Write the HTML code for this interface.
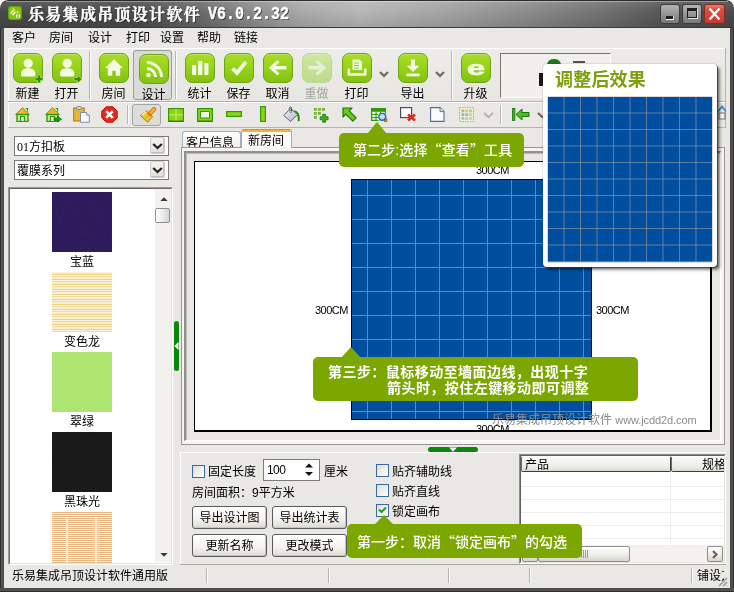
<!DOCTYPE html>
<html lang="zh-CN">
<head>
<meta charset="utf-8">
<title>乐易集成吊顶设计软件</title>
<style>
*{box-sizing:border-box;margin:0;padding:0}
html,body{width:734px;height:592px;overflow:hidden;background:#fff}
body{font-family:"Liberation Sans","Noto Sans CJK SC",sans-serif;font-size:12px;color:#000;line-height:14px}
#win,#win div,#win span.p,#win svg{position:absolute}
#win{left:0;top:0;width:734px;height:592px;background:#e9e8e4;border-radius:8px 8px 0 0;overflow:hidden}
#title{left:0;top:0;width:734px;height:28px;background:linear-gradient(180deg,rgba(255,255,255,.12) 0,rgba(255,255,255,0) 45%,rgba(0,0,0,.10) 100%),linear-gradient(90deg,#484848 0,#4c4c4c 19%,#686868 27%,#8a8a8a 34%,#a8a8a8 41%,#b6b6b6 49%,#a2a2a2 61%,#8c8c8c 71%,#707070 82%,#565656 90%,#4a4a4a 100%);border-top:1px solid #2b2b2b;border-bottom:1px solid #3a3a3a;border-radius:8px 8px 0 0}
#title .hl{left:6px;top:0;width:722px;height:1px;background:rgba(255,255,255,.35)}
#ttext{left:28px;top:3px;font-family:"Liberation Serif","Noto Serif CJK SC",serif;font-weight:bold;font-size:16px;line-height:22px;color:#fff;white-space:nowrap;letter-spacing:1.3px;text-shadow:1px 1px 0 #2a2a2a;-webkit-text-stroke:.35px #fff}
#ttext span{position:absolute;left:180px;top:-1px;font-family:'Liberation Mono',monospace;font-size:18px;letter-spacing:0;transform:scaleX(.833);transform-origin:0 0}
.fr{background:#4b4b4b}
.t{white-space:nowrap;font-size:12px;line-height:14px;margin-top:1px}
.ico{width:30px;height:30px;border-radius:7px;border:1px solid #6fa312;background:linear-gradient(180deg,#a8dc2a 0,#98d41a 45%,#84c212 100%);box-shadow:inset 0 1px 0 rgba(255,255,255,.25)}
.ico svg{left:-1px;top:-1px}
.lbl{width:39px;text-align:center;font-size:12px;line-height:14px;white-space:nowrap}
.vsep{width:2px;border-left:1px solid #b9b7b0;border-right:1px solid #fff}
.tip{background:#7ca700;color:#fff;border-radius:5px;font-weight:bold;font-size:14px;line-height:16px;white-space:nowrap}
.btn{width:75px;height:23px;border:1px solid #5a5a5a;border-radius:3px;background:linear-gradient(180deg,#fff 0,#f3f2ee 60%,#dcdad2 100%);text-align:center;line-height:22px;font-size:12px;box-shadow:inset -1px -1px 0 #c8c6bd}
.q{font-family:'Noto Sans CJK SC',sans-serif}
.chk{width:13px;height:13px;border:1px solid #3a6a9c;background:linear-gradient(135deg,#dddcd6,#fff)}
</style>
</head>
<body>
<div id="win">
<div class="fr" style="left:0;top:20px;width:4px;height:572px;background:linear-gradient(90deg,#2e2e2e 0,#2e2e2e 1px,#5a5a5a 1px,#4b4b4b 4px)"></div>
<div class="fr" style="left:730px;top:20px;width:4px;height:572px;background:linear-gradient(90deg,#4b4b4b 0,#555 3px,#2e2e2e 3px)"></div>
<div class="fr" style="left:0;top:588px;width:734px;height:4px;background:linear-gradient(180deg,#4b4b4b 0,#555 3px,#2e2e2e 3px)"></div>
<div id="title"><div class="hl"></div>
<svg style="left:8px;top:5px" width="14" height="14" viewBox="0 0 14 14"><rect x="0" y="0" width="14" height="14" rx="3" fill="#5aa50c"/><rect x="1" y="1" width="12" height="12" rx="2.5" fill="#7cc416"/><path d="M2.500 7.500 6.500 3.500M4.500 9 7.500 6" stroke="#fff" stroke-width="1.500"/><path d="M5.500 1.500l.9 1.800 1.800.9-1.800.9-.9 1.800-.9-1.800-1.800-.9 1.800-.9zM9.500 4l.7 1.400 1.400.7-1.400.7-.7 1.400-.7-1.400-1.400-.7 1.400-.7z" fill="#ffd21e"/><rect x="8" y="8.5" width="4" height="3" fill="#fff"/><rect x="9" y="9.3" width="2" height="1.4" fill="#6cb40f"/></svg>
<div id="ttext">乐易集成吊顶设计软件<span>V6.0.2.32</span></div>
<div style="left:660px;top:3px;width:20px;height:20px;border-radius:3px;border:1px solid #3c3c3c;background:linear-gradient(180deg,#b4b4b4,#787878)"><div style="left:5px;top:11px;width:7px;height:3px;background:#1e1e1e;border-bottom:1px solid #fff;border-right:1px solid #ddd;box-sizing:content-box"></div></div>
<div style="left:682px;top:3px;width:20px;height:20px;border-radius:3px;border:1px solid #3c3c3c;background:linear-gradient(180deg,#b4b4b4,#787878)"><div style="left:4px;top:3px;width:10px;height:10px;border:1px solid #1e1e1e;border-top:3px solid #1e1e1e;box-shadow:1px 1px 0 #e8e8e8"></div></div>
<div style="left:704px;top:3px;width:21px;height:20px;border-radius:3px;border:1px solid #8c2a22;background:linear-gradient(180deg,#e8806a 0,#dc4e40 25%,#c83a30 100%)"><svg style="left:3px;top:2px" width="13" height="14" viewBox="0 0 13 14" overflow="visible"><path d="M1.5 1.5 L11.5 12.5 M11.5 1.5 L1.5 12.5" stroke="#fff" stroke-width="2.2"/></svg></div>
</div>
<div class="t" style="left:12px;top:30px">客户</div>
<div class="t" style="left:49px;top:30px">房间</div>
<div class="t" style="left:88px;top:30px">设计</div>
<div class="t" style="left:126px;top:30px">打印</div>
<div class="t" style="left:160px;top:30px">设置</div>
<div class="t" style="left:197px;top:30px">帮助</div>
<div class="t" style="left:234px;top:30px">链接</div>
<div style="left:8px;top:48px;width:718px;height:54px;background:linear-gradient(180deg,#eeece9,#e8e6e1)"></div>
<div style="left:8px;top:48px;width:718px;height:1px;background:#fff"></div>
<div style="left:8px;top:48px;width:1px;height:53px;background:#fff"></div>
<div style="left:8px;top:101px;width:718px;height:1px;background:#b5b3ab"></div>
<div style="left:8px;top:102px;width:718px;height:1px;background:#fff"></div>
<div style="left:8px;top:102px;width:1px;height:25px;background:#fff"></div>
<div style="left:8px;top:127px;width:718px;height:1px;background:#b5b3ab"></div>
<div style="left:725px;top:48px;width:1px;height:80px;background:#b5b3ab"></div>
<div style="left:133px;top:50px;width:39px;height:50px;border:1px solid #9d9d9a;border-radius:3px;background:#dadad6"></div>
<div class="ico" style="left:13px;top:53px"><svg width="30" height="30" viewBox="0 0 30 30"><circle cx="15.2" cy="10.3" r="4.6" fill="#f3fae0"/><path d="M8 21.5c0-4 2-6.2 7.2-6.2s7.2 2.2 7.2 6.2c0 1.4-.8 2-2 2h-10.4c-1.2 0-2-.6-2-2z" fill="#f3fae0"/><path d="M24.600 22h2.800v2.600H30v2.800h-2.600V30h-2.800v-2.600H22v-2.800h2.600z" fill="#2c8a0a" stroke="#a5dc4a" stroke-width=".9"/></svg></div>
<div class="lbl" style="left:8px;top:87px">新建</div>
<div class="ico" style="left:52px;top:53px"><svg width="30" height="30" viewBox="0 0 30 30"><circle cx="15.2" cy="10.3" r="4.6" fill="#f3fae0"/><path d="M8 21.5c0-4 2-6.2 7.2-6.2s7.2 2.2 7.2 6.2c0 1.4-.8 2-2 2h-10.4c-1.2 0-2-.6-2-2z" fill="#f3fae0"/><path d="M22 24.600h3.600V22.200l4.400 4-4.400 4v-2.400H22z" fill="#2c8a0a" stroke="#a5dc4a" stroke-width=".9"/></svg></div>
<div class="lbl" style="left:47px;top:87px">打开</div>
<div class="ico" style="left:99px;top:53px"><svg width="30" height="30" viewBox="0 0 30 30"><path d="M15 6.2 6 15h2.8v7.8h4.4v-5h3.6v5h4.4V15H24z" fill="#f3fae0"/></svg></div>
<div class="lbl" style="left:94px;top:87px">房间</div>
<div class="ico" style="left:139px;top:54px"><svg width="30" height="30" viewBox="0 0 30 30"><circle cx="9.5" cy="21" r="2.3" fill="#f3fae0"/><path d="M8 14.5a8.5 8.5 0 0 1 8.5 8.5" fill="none" stroke="#f3fae0" stroke-width="3"/><path d="M8 8.5a14.5 14.5 0 0 1 14.5 14.5" fill="none" stroke="#f3fae0" stroke-width="3"/></svg></div>
<div class="lbl" style="left:134px;top:88px">设计</div>
<div class="ico" style="left:185px;top:53px"><svg width="30" height="30" viewBox="0 0 30 30"><rect x="7" y="12" width="4.2" height="10" rx=".8" fill="#f3fae0"/><rect x="13" y="8" width="4.4" height="14" rx=".8" fill="#f3fae0"/><rect x="19.3" y="10" width="4.2" height="12" rx=".8" fill="#f3fae0"/></svg></div>
<div class="lbl" style="left:180px;top:87px">统计</div>
<div class="ico" style="left:224px;top:53px"><svg width="30" height="30" viewBox="0 0 30 30"><path d="M8.5 15.5 13 20 21.8 8.8" fill="none" stroke="#f3fae0" stroke-width="3.8" stroke-linejoin="miter"/></svg></div>
<div class="lbl" style="left:219px;top:87px">保存</div>
<div class="ico" style="left:263px;top:53px"><svg width="30" height="30" viewBox="0 0 30 30"><path d="M5.8 14.8 14.5 7l1.9 2.2-4 3.8H23.5v3.6H12.4l4 3.8-1.9 2.2z" fill="#f3fae0"/></svg></div>
<div class="lbl" style="left:258px;top:87px">取消</div>
<div class="ico" style="left:302px;top:53px;background:linear-gradient(180deg,#cfe6a0,#bedb8c);border-color:#bcd694"><svg width="30" height="30" viewBox="0 0 30 30"><path d="M24.2 14.8 15.5 7l-1.9 2.2 4 3.8H6.5v3.6h11.1l-4 3.8 1.9 2.2z" fill="#e6f0d2"/></svg></div>
<div class="lbl" style="left:297px;top:87px;color:#a3a3a3">重做</div>
<div class="ico" style="left:342px;top:53px"><svg width="30" height="30" viewBox="0 0 30 30"><path d="M10.5 6.5h7l2.5 2.5v8h-9.5z" fill="#f3fae0"/><path d="M12 10h5M12 12.5h5M12 15h5" stroke="#8cc820" stroke-width="1"/><path d="M6.8 15.5v6h16.4v-6" fill="none" stroke="#f3fae0" stroke-width="2.6" stroke-linejoin="round"/></svg></div>
<div class="lbl" style="left:337px;top:87px">打印</div>
<div class="ico" style="left:398px;top:53px"><svg width="30" height="30" viewBox="0 0 30 30"><path d="M13 6.5h4v6.3h4.3L15 19l-6.3-6.200H13z" fill="#f3fae0"/><rect x="8.200" y="20.5" width="13.6" height="2.800" rx="1" fill="#f3fae0"/></svg></div>
<div class="lbl" style="left:393px;top:87px">导出</div>
<div class="ico" style="left:461px;top:53px"><svg width="30" height="30" viewBox="0 0 30 30"><text x="15" y="22.500" text-anchor="middle" font-family="Liberation Sans,sans-serif" font-weight="bold" font-size="26" fill="#f3fae0" stroke="#f3fae0" stroke-width=".9" transform="translate(15 0) scale(1.25 .78) translate(-15 6.200)">e</text></svg></div>
<div class="lbl" style="left:456px;top:87px">升级</div>
<div class="vsep" style="left:89px;top:51px;height:48px"></div>
<div class="vsep" style="left:175px;top:51px;height:48px"></div>
<div class="vsep" style="left:451px;top:51px;height:48px"></div>
<svg style="left:379px;top:71px" width="10" height="7" viewBox="0 0 10 7"><path d="M1 1 5 5 9 1" fill="none" stroke="#6a6158" stroke-width="2"/></svg>
<svg style="left:435px;top:71px" width="10" height="7" viewBox="0 0 10 7"><path d="M1 1 5 5 9 1" fill="none" stroke="#6a6158" stroke-width="2"/></svg>
<div style="left:500px;top:53px;width:111px;height:45px;background:#f1f0ed;border-left:1px solid #77756e;border-top:1px solid #77756e;border-right:1px solid #fff;border-bottom:1px solid #fff"></div>
<div style="left:539px;top:73px;width:4px;height:13px;background:#1a1a1a"></div>
<div style="left:547px;top:59px;width:14px;height:6px;border-radius:7px 7px 0 0;background:#1d7a1d"></div>
<div style="left:573px;top:61px;width:12px;height:2px;background:#555"></div>
<svg style="left:15px;top:107px" width="15" height="15" viewBox="0 0 15 15"><path d="M7.500 .8 .6 7.600h13.800z" fill="#f6b422" stroke="#5a9a10" stroke-width="1"/><path d="M10.500 1.500h2v3" fill="none" stroke="#2f9a06" stroke-width="1.200"/><rect x="2" y="7.500" width="11" height="7" fill="#c9ee9a" stroke="#2f9a06" stroke-width="1.400"/><rect x="5.500" y="9.500" width="4" height="5" fill="#eaf8d4" stroke="#2f9a06" stroke-width="1.200"/></svg>
<svg style="left:45px;top:107px" width="17" height="15" viewBox="0 0 17 15"><path d="M7.500 .8 .6 7.600h13.800z" fill="#f6b422" stroke="#5a9a10" stroke-width="1"/><path d="M10.500 1.500h2v3" fill="none" stroke="#2f9a06" stroke-width="1.200"/><rect x="2" y="7.500" width="11" height="7" fill="#c9ee9a" stroke="#2f9a06" stroke-width="1.400"/><rect x="5.500" y="9.500" width="4" height="5" fill="#eaf8d4" stroke="#2f9a06" stroke-width="1.200"/><path d="M9 11h3.500V9l4 3.200-4 3.200v-2H9z" fill="#22a010" stroke="#0b6a00" stroke-width=".7"/></svg>
<svg style="left:73px;top:106px" width="17" height="17" viewBox="0 0 17 17"><rect x=".7" y="2" width="10.500" height="13" fill="#e9b43a" stroke="#b07a12" stroke-width="1"/><rect x="3.500" y=".5" width="5" height="3" rx="1" fill="#c9d3e6" stroke="#6a7c9c" stroke-width=".8"/><path d="M7.500 6.500h6l2.800 2.800v7h-8.800z" fill="#fafcff" stroke="#7a8db0" stroke-width="1"/><path d="M13.500 6.500v2.800h2.800" fill="#d5deee" stroke="#7a8db0" stroke-width=".8"/></svg>
<svg style="left:101px;top:106px" width="17" height="17" viewBox="0 0 17 17"><path d="M5.200 .8h6.600l4.400 4.400v6.600l-4.400 4.400H5.200L.8 11.800V5.200z" fill="#e52a1c" stroke="#b01208" stroke-width="1"/><path d="M5.200 5.200l6.600 6.600M11.800 5.200l-6.600 6.600" stroke="#fff" stroke-width="2.600"/></svg>
<div class="vsep" style="left:127px;top:105px;height:19px"></div>
<div style="left:132px;top:104px;width:29px;height:22px;border:1px solid #a3a39f;border-radius:3px;background:#dcdcd8"></div>
<svg style="left:140px;top:107px" width="17" height="16" viewBox="0 0 17 16"><path d="M10.500 6 14 2.300" stroke="#b8780a" stroke-width="4.400" stroke-linecap="round"/><path d="M10.500 6 14 2.300" stroke="#f3b325" stroke-width="2.800" stroke-linecap="round"/><path d="M6.400 4 12.600 9.500 7.600 15.200.4 8.500z" fill="#f6c220" stroke="#b8780a" stroke-width="1"/><path d="M7.300 5.500 11.300 9.200" stroke="#ee6a1c" stroke-width="1.800"/><path d="M1.800 8.200 6.200 4.800" stroke="#fff7d8" stroke-width="1.200"/><path d="M5.500 12 8.500 8.800" stroke="#9ed23a" stroke-width="1.400"/></svg>
<svg style="left:168px;top:108px" width="16" height="14" viewBox="0 0 16 14"><rect x=".6" y=".6" width="14.800" height="12.800" fill="#8ed414" stroke="#2f9a06" stroke-width="1.200"/><path d="M8 1v12M1 6.800h14" stroke="#c7f06a" stroke-width="1"/><path d="M1 13.200h14" stroke="#1f7a04" stroke-width="1"/></svg>
<svg style="left:197px;top:108px" width="16" height="14" viewBox="0 0 16 14"><rect x=".6" y=".6" width="14.800" height="12.800" fill="#8ed414" stroke="#2f9a06" stroke-width="1.200"/><rect x="3.500" y="3.500" width="9" height="6.500" fill="#f0f6e8" stroke="#2f9a06" stroke-width="1"/><path d="M1 13.200h14" stroke="#1f7a04" stroke-width="1"/></svg>
<svg style="left:226px;top:111px" width="16" height="6" viewBox="0 0 16 6"><rect x=".6" y=".6" width="14.800" height="4.800" fill="#8ed414" stroke="#2f9a06" stroke-width="1.200"/></svg>
<svg style="left:260px;top:106px" width="6" height="16" viewBox="0 0 6 16"><rect x=".6" y=".6" width="4.800" height="14.800" fill="#8ed414" stroke="#2f9a06" stroke-width="1.200"/></svg>
<svg style="left:283px;top:106px" width="17" height="16" viewBox="0 0 17 16"><defs><linearGradient id="bk" x1="0" y1="0" x2="1" y2="1"><stop offset="0" stop-color="#f4f6fa"/><stop offset="1" stop-color="#aab2c0"/></linearGradient></defs><path d="M11 5.200C14.500 5.500 16.200 9 15.600 15.200" fill="none" stroke="#1f8a06" stroke-width="2"/><path d="M7.300 2.500 14.700 8.300 7.700 15.600.8 9.500z" fill="url(#bk)" stroke="#5a6474" stroke-width="1"/><path d="M7.800 5.500C6 3.500 6 1.200 7.500 1c1.200 0 1.500 1.500 .8 4.500" fill="none" stroke="#3a4454" stroke-width=".9"/><circle cx="7.800" cy="5.800" r="1" fill="#fff" stroke="#3a4454" stroke-width=".6"/></svg>
<svg style="left:314px;top:108px" width="15" height="15" viewBox="0 0 15 15"><rect x="0.3" y="0.3" width="2.400" height="2.400" fill="#8fc43a" stroke="#4a9a1a" stroke-width=".5"/><rect x="4.3" y="0.3" width="2.400" height="2.400" fill="#8fc43a" stroke="#4a9a1a" stroke-width=".5"/><rect x="8.3" y="0.3" width="2.400" height="2.400" fill="#8fc43a" stroke="#4a9a1a" stroke-width=".5"/><rect x="0.3" y="4.3" width="2.400" height="2.400" fill="#8fc43a" stroke="#4a9a1a" stroke-width=".5"/><rect x="4.3" y="4.3" width="2.400" height="2.400" fill="#8fc43a" stroke="#4a9a1a" stroke-width=".5"/><rect x="0.3" y="8.3" width="2.400" height="2.400" fill="#8fc43a" stroke="#4a9a1a" stroke-width=".5"/><path d="M8.700 6.300h2.900v2.500h2.500v2.900h-2.500v2.500H8.700v-2.500H6.200V8.800h2.500z" fill="#3fb01a" stroke="#17750a" stroke-width=".8"/></svg>
<svg style="left:342px;top:107px" width="15" height="15" viewBox="0 0 15 15"><path d="M1 1h9L7.200 3.800l7 7-3.400 3.400-7-7L1 10z" fill="#6cc81a" stroke="#1f7a04" stroke-width="1.200" stroke-linejoin="round"/></svg>
<svg style="left:371px;top:108px" width="17" height="14" viewBox="0 0 17 14"><rect x=".6" y=".6" width="13.800" height="11.800" fill="#eaf6da" stroke="#2f9a06" stroke-width="1.200"/><rect x=".6" y=".6" width="13.800" height="3.200" fill="#2f9a06"/><path d="M1 6.500h13M1 9.500h13M5 4v8.500M9.500 4v8.500" stroke="#2f9a06" stroke-width="1"/><rect x="7" y="5" width="7.500" height="7.500" fill="#fff"/><circle cx="11.300" cy="8.800" r="3.400" fill="#bfe0ff" stroke="#1a64c8" stroke-width="1.400"/><rect x="13.500" y="11" width="2.500" height="2.500" fill="#e8a020" stroke="#5a3a00" stroke-width=".6"/></svg>
<svg style="left:400px;top:107px" width="17" height="15" viewBox="0 0 17 15"><rect x=".6" y=".6" width="11" height="10" fill="#fff" stroke="#4a4a6a" stroke-width="1.200"/><path d="M8 7.500l7 6M15 7.500l-7 6" stroke="#e02a1a" stroke-width="2.600"/></svg>
<svg style="left:430px;top:107px" width="15" height="15" viewBox="0 0 15 15"><path d="M.6 .6h9.400l4 4v9.800H.6z" fill="#fafcff" stroke="#5a6a8a" stroke-width="1.100"/><path d="M10 .6v4h4" fill="#d8e0f0" stroke="#5a6a8a" stroke-width=".9"/></svg>
<svg style="left:459px;top:107px" width="15" height="15" viewBox="0 0 15 15"><rect x=".5" y=".5" width="14" height="14" fill="#e6f0da" stroke="#9ac26a" stroke-width="1" stroke-dasharray="1.500 1"/><rect x="2.5" y="2.5" width="2.800" height="2.800" fill="#f0a070"/><rect x="6.3" y="2.5" width="2.800" height="2.800" fill="#f0c060"/><rect x="10.1" y="2.5" width="2.800" height="2.800" fill="#b0d080"/><rect x="2.5" y="6.3" width="2.800" height="2.800" fill="#90b8e0"/><rect x="6.3" y="6.3" width="2.800" height="2.800" fill="#90b8e0"/><rect x="10.1" y="6.3" width="2.800" height="2.800" fill="#f0c080"/><rect x="2.5" y="10.1" width="2.800" height="2.800" fill="#a0d090"/><rect x="6.3" y="10.1" width="2.800" height="2.800" fill="#c0d0a0"/><rect x="10.1" y="10.1" width="2.800" height="2.800" fill="#e0c0a0"/></svg>
<svg style="left:483px;top:112px" width="11" height="7" viewBox="0 0 11 7"><path d="M1 1 5.500 5.200 10 1" fill="none" stroke="#b4b4b0" stroke-width="2"/></svg>
<div class="vsep" style="left:500px;top:105px;height:19px"></div>
<svg style="left:512px;top:108px" width="18" height="13" viewBox="0 0 18 13"><rect x=".5" y=".5" width="2.400" height="12" fill="#3ab010" stroke="#17750a" stroke-width=".8"/><path d="M4 6.500 10 1v3.500h7v4h-7V12z" fill="#4ac018" stroke="#17750a" stroke-width="1"/></svg>
<svg style="left:537px;top:112px" width="11" height="7" viewBox="0 0 11 7"><path d="M1 1 5.500 5.200 10 1" fill="none" stroke="#6a6158" stroke-width="2"/></svg>
<svg style="left:718px;top:104px" width="8" height="22" viewBox="0 0 8 22"><path d="M0 6 4 1 8 6v3L4 4 0 9z" fill="#3a8ad8"/><rect x="1" y="9" width="6" height="6" fill="#f4f4f4" stroke="#555" stroke-width=".8"/></svg>
<div style="left:14px;top:136px;width:155px;height:20px;background:#fff;border:1px solid #7b7b7b"></div>
<div class="t" style="left:17px;top:139px"><span style="font-family:'Liberation Serif',serif">01</span>方扣板</div>
<div style="left:150px;top:137px;width:15px;height:17px;border:1px solid #d8c8d4;border-radius:2px;background:linear-gradient(180deg,#f4f3ef,#e2e0d8);box-shadow:inset -1px -1px 0 #c9b9c6"></div>
<svg style="left:152px;top:143px" width="11" height="7" viewBox="0 0 11 7"><path d="M1.200 1 5.500 5 9.800 1" fill="none" stroke="#222" stroke-width="2.200"/></svg>
<div style="left:14px;top:160px;width:155px;height:20px;background:#fff;border:1px solid #7b7b7b"></div>
<div class="t" style="left:17px;top:163px">覆膜系列</div>
<div style="left:150px;top:161px;width:15px;height:17px;border:1px solid #d8c8d4;border-radius:2px;background:linear-gradient(180deg,#f4f3ef,#e2e0d8);box-shadow:inset -1px -1px 0 #c9b9c6"></div>
<svg style="left:152px;top:167px" width="11" height="7" viewBox="0 0 11 7"><path d="M1.200 1 5.500 5 9.800 1" fill="none" stroke="#222" stroke-width="2.200"/></svg>
<div style="left:8px;top:187px;width:165px;height:378px;background:#fff;border:1px solid #9a9a96;border-right-color:#fff;border-bottom-color:#fff"></div>
<div style="left:9px;top:188px;width:163px;height:376px;border:1px solid #6b6b68;border-right-color:#e4e2dc;border-bottom-color:#e4e2dc;overflow:hidden" id="lst">
<div style="left:42px;top:3px;width:60px;height:60px;overflow:hidden;"><svg width="60" height="60" style="left:0;top:0"><filter id="n3" x="0" y="0" width="100%" height="100%"><feTurbulence type="fractalNoise" baseFrequency=".9" numOctaves="2" seed="3"/><feColorMatrix type="matrix" values=".9 0 0 0 0  .9 0 0 0 0  .9 0 0 0 0  0 0 0 0 1"/><feComposite operator="arithmetic" k1="0" k2="1" k3="0" k4="0"/></filter><rect width="60" height="60" fill="#1e0a50"/><rect width="60" height="60" filter="url(#n3)" opacity=".10" style="mix-blend-mode:screen"/></svg></div>
<div class="t" style="left:12px;top:65px;width:120px;text-align:center">宝蓝</div>
<div style="left:42px;top:83px;width:60px;height:60px;overflow:hidden;background:repeating-linear-gradient(180deg,#f6efd6 0,#f6efd6 2px,#ecd384 2px,#ecd384 3px,#f8f2de 3px,#f8f2de 4px,#efdc9c 4px,#efdc9c 5px)"></div>
<div class="t" style="left:12px;top:145px;width:120px;text-align:center">变色龙</div>
<div style="left:42px;top:163px;width:60px;height:60px;overflow:hidden;background:#aee571"></div>
<div class="t" style="left:12px;top:225px;width:120px;text-align:center">翠绿</div>
<div style="left:42px;top:243px;width:60px;height:60px;overflow:hidden;"><svg width="60" height="60" style="left:0;top:0"><filter id="n7" x="0" y="0" width="100%" height="100%"><feTurbulence type="fractalNoise" baseFrequency=".9" numOctaves="2" seed="7"/><feColorMatrix type="matrix" values=".8 0 0 0 0  .8 0 0 0 0  .8 0 0 0 0  0 0 0 0 1"/><feComposite operator="arithmetic" k1="0" k2="1" k3="0" k4="0"/></filter><rect width="60" height="60" fill="#0a0a0a"/><rect width="60" height="60" filter="url(#n7)" opacity=".10" style="mix-blend-mode:screen"/></svg></div>
<div class="t" style="left:12px;top:305px;width:120px;text-align:center">黑珠光</div>
<div style="left:42px;top:323px;width:60px;height:60px;overflow:hidden;background:repeating-linear-gradient(180deg,#e9b682 0,#e9b682 1px,#fbf3e2 1px,#fbf3e2 2px)"><div style="left:14px;top:6px;width:2px;height:60px;background:#f8edcf"></div><div style="left:43px;top:6px;width:2px;height:60px;background:#f8edcf"></div></div>
<div style="left:145px;top:0;width:17px;height:373px;background:#f2f1ed"></div>
<svg style="left:150px;top:8px" width="8" height="4" viewBox="0 0 8 4"><path d="M.3 4 4 .3 7.700 4z" fill="#3a3a3a"/></svg>
<svg style="left:150px;top:364px" width="8" height="4" viewBox="0 0 8 4"><path d="M.3 0 4 3.700 7.700 0z" fill="#3a3a3a"/></svg>
<div style="left:145px;top:19px;width:15px;height:15px;border:1px solid #8f8f8c;border-radius:2px;background:linear-gradient(90deg,#fff,#e8e8ea 60%,#cfd4dc)"></div>
</div>
<div style="left:174px;top:321px;width:5px;height:50px;border-radius:2.500px;background:#0b870b"></div>
<svg style="left:174px;top:342px" width="5" height="8" viewBox="0 0 5 8"><path d="M4.500 0v8L.3 4z" fill="#fff"/></svg>
<div style="left:182px;top:131px;width:59px;height:17px;border:1px solid #9eb0bc;border-bottom:none;border-radius:3px 3px 0 0;background:linear-gradient(180deg,#fdfdfc,#f1f0ea);overflow:hidden"><div class="t" style="left:3px;top:3px">客户信息</div></div>
<div style="left:181px;top:147px;width:544px;height:298px;border:1px solid #9a9590;background:#f6f5f1"></div>
<div style="left:241px;top:129px;width:51px;height:19px;border:1px solid #9eb0bc;border-bottom:none;border-top:none;border-radius:3px 3px 0 0;background:#fbfbf9;overflow:hidden"><div style="left:-1px;top:0;width:51px;height:3px;background:#f5b13a;border-top:1px solid #e68b2c"></div><div class="t" style="left:6px;top:4px">新房间</div></div>
<div style="left:184px;top:151px;width:537px;height:290px;background:#e9e8e4;border:2px solid #8f8f8c;border-right:1px solid #fff;border-bottom:1px solid #fff;box-shadow:inset 1px 1px 1px #b9b9b5"></div>
<div style="left:194px;top:161px;width:518px;height:271px;background:#fff;border:1px solid #000;border-right-width:2px;border-bottom-width:2px;overflow:hidden" id="cv">
<div style="left:156px;top:17px;width:241px;height:241px;background-color:#024e9e;border:1px solid #000;background-image:linear-gradient(90deg,#828282 0,#828282 1px,transparent 1px),linear-gradient(180deg,#828282 0,#828282 1px,transparent 1px);background-size:24px 24px;background-position:15px 15px"></div>
<div style="left:281px;top:2px;font-family:'Liberation Sans',sans-serif;font-size:11px;line-height:12px;letter-spacing:-.5px;white-space:nowrap">300CM</div>
<div style="left:281px;top:261px;font-family:'Liberation Sans',sans-serif;font-size:11px;line-height:12px;letter-spacing:-.5px;white-space:nowrap">300CM</div>
<div style="left:120px;top:142px;font-family:'Liberation Sans',sans-serif;font-size:11px;line-height:12px;letter-spacing:-.5px;white-space:nowrap">300CM</div>
<div style="left:401px;top:142px;font-family:'Liberation Sans',sans-serif;font-size:11px;line-height:12px;letter-spacing:-.5px;white-space:nowrap">300CM</div>
<div class="t" style="left:297px;top:250px;color:#8a8a8a;font-size:12px">乐易集成吊顶设计软件 <span style="font-size:11px;letter-spacing:-.1px">www.jcdd2d.com</span></div>
</div>
<div style="left:428px;top:447px;width:50px;height:5px;border-radius:2.500px;background:#0b870b"></div>
<svg style="left:449px;top:447px" width="8" height="5" viewBox="0 0 8 5"><path d="M0 .5h8L4 4.700z" fill="#fff"/></svg>
<div style="left:180px;top:452px;width:546px;height:1px;background:#fff"></div>
<div style="left:180px;top:452px;width:1px;height:112px;background:#fff"></div>
<div class="chk" style="left:192px;top:465px"></div>
<div class="t" style="left:208px;top:464px">固定长度</div>
<div style="left:263px;top:459px;width:57px;height:22px;background:#fff;border:1px solid #7b7b7b"></div>
<div style="left:267px;top:463px;font-family:'Liberation Sans',sans-serif;font-size:12px;line-height:14px;letter-spacing:-.6px">100</div>
<svg style="left:305px;top:463px" width="8" height="13" viewBox="0 0 8 13"><path d="M0 4.500 4 .5 8 4.500zM0 9 4 13 8 9z" fill="#111"/></svg>
<div class="t" style="left:324px;top:464px">厘米</div>
<div class="t" style="left:192px;top:485px">房间面积：<span style="font-family:'Liberation Sans',sans-serif">9</span>平方米</div>
<div class="btn" style="left:192px;top:506px">导出设计图</div>
<div class="btn" style="left:272px;top:506px">导出统计表</div>
<div class="btn" style="left:192px;top:534px">更新名称</div>
<div class="btn" style="left:272px;top:534px">更改模式</div>
<div class="chk" style="left:376px;top:464px"></div>
<div class="t" style="left:392px;top:464px">贴齐辅助线</div>
<div class="chk" style="left:376px;top:484px"></div>
<div class="t" style="left:392px;top:484px">贴齐直线</div>
<div class="chk" style="left:376px;top:504px"><svg style="left:1px;top:1px" width="9" height="9" viewBox="0 0 9 9"><path d="M1 3.500 3.500 6 8 1.500" fill="none" stroke="#21a121" stroke-width="2"/></svg></div>
<div class="t" style="left:392px;top:504px">锁定画布</div>
<div style="left:519px;top:454px;width:207px;height:110px;background:#fff;border:1px solid #8f8f8c;border-right-color:#fff;border-bottom-color:#fff"></div>
<div style="left:520px;top:455px;width:205px;height:108px;border:1px solid #5f5f5c;border-right-color:#e4e2dc;border-bottom-color:#e4e2dc;overflow:hidden" id="tb">
<div style="left:0;width:150px;border:1px solid #3c3c3c;border-left-color:#6a6a6a;border-top-color:#fff;border-radius:2px;background:linear-gradient(180deg,#fafaf7,#ecebe5 70%,#dddbd2);height:16px;top:0"><div class="t" style="left:3px;top:0">产品</div></div>
<div style="left:150px;width:100px;border:1px solid #3c3c3c;border-left-color:#6a6a6a;border-top-color:#fff;border-radius:2px;background:linear-gradient(180deg,#fafaf7,#ecebe5 70%,#dddbd2);height:16px;top:0"><div class="t" style="left:30px;top:0">规格</div></div>
<div style="left:0;top:30px;width:205px;height:1px;background:#ededed"></div>
<div style="left:0;top:43px;width:205px;height:1px;background:#ededed"></div>
<div style="left:0;top:56px;width:205px;height:1px;background:#ededed"></div>
<div style="left:0;top:69px;width:205px;height:1px;background:#ededed"></div>
<div style="left:0;top:82px;width:205px;height:1px;background:#ededed"></div>
<div style="left:149px;top:16px;width:1px;height:74px;background:#ededed"></div>
<div style="left:0;top:89px;width:205px;height:18px;background:#f3f2ee"></div>
<div style="left:1px;width:16px;border:1px solid #8f8f8c;border-radius:2px;background:linear-gradient(180deg,#fff,#ecebe6 60%,#d6d4cc);height:16px;top:90px"></div>
<div style="left:17px;width:92px;border:1px solid #8f8f8c;border-radius:2px;background:linear-gradient(180deg,#fff,#ecebe6 60%,#d6d4cc);height:16px;top:90px"></div>
<div style="left:60px;top:94px;width:7px;height:8px;background:repeating-linear-gradient(90deg,#9a9a96 0,#9a9a96 1px,transparent 1px,transparent 2px)"></div>
<div style="left:186px;width:16px;border:1px solid #8f8f8c;border-radius:2px;background:linear-gradient(180deg,#fff,#ecebe6 60%,#d6d4cc);height:16px;top:90px"><svg style="left:4px;top:3px" width="6" height="9" viewBox="0 0 6 9"><path d="M1 1 4.500 4.500 1 8" fill="none" stroke="#6a6158" stroke-width="2.200"/></svg></div>
</div>
<div style="left:180px;top:564px;width:546px;height:1px;background:#a9a7a0"></div>
<div class="t" style="left:12px;top:568px">乐易集成吊顶设计软件通用版</div>
<div style="left:206px;top:568px;width:2px;height:15px;border-left:1px solid #b5b3ab;border-right:1px solid #fff"></div>
<div style="left:328px;top:568px;width:2px;height:15px;border-left:1px solid #b5b3ab;border-right:1px solid #fff"></div>
<div style="left:448px;top:568px;width:2px;height:15px;border-left:1px solid #b5b3ab;border-right:1px solid #fff"></div>
<div style="left:529px;top:568px;width:2px;height:15px;border-left:1px solid #b5b3ab;border-right:1px solid #fff"></div>
<div style="left:691px;top:568px;width:2px;height:15px;border-left:1px solid #b5b3ab;border-right:1px solid #fff"></div>
<div class="t" style="left:697px;top:568px;width:27px;overflow:hidden">铺设方式</div>
<svg style="left:716px;top:575px" width="12" height="12" viewBox="0 0 12 12"><path d="M11 3 3 11M11 7 7 11M11 10.500 10.500 11" stroke="#9a9890" stroke-width="1.500"/></svg>
<svg style="left:367px;top:122px" width="20" height="12" viewBox="0 0 20 12"><path d="M10 0 20 12H0z" fill="#7ca700"/></svg>
<div class="tip" style="left:339px;top:133px;width:185px;height:34px"><div style="left:14px;top:8px;font-weight:500;letter-spacing:.12px">第二步:选择<span class="q">“</span>查看<span class="q">”</span>工具</div></div>
<svg style="left:341px;top:347px" width="20" height="11" viewBox="0 0 20 11"><path d="M10 0 20 11H0z" fill="#7ca700"/></svg>
<div class="tip" style="left:313px;top:357px;width:325px;height:44px"><div style="left:15px;top:7px;letter-spacing:.45px">第三步：鼠标移动至墙面边线，出现十字</div></div>
<div class="tip" style="left:387px;top:380px;background:none;letter-spacing:.45px">箭头时，按住左键移动即可调整</div>
<svg style="left:374px;top:515px" width="20" height="10" viewBox="0 0 20 10"><path d="M10 0 20 10H0z" fill="#7ca700"/></svg>
<div class="tip" style="left:347px;top:524px;width:235px;height:34px"><div style="left:10px;top:9px;font-weight:500">第一步：取消<span class="q">“</span>锁定画布<span class="q">”</span>的勾选</div></div>
<div style="left:543px;top:64px;width:174px;height:203px;background:#fff;border-radius:4px;box-shadow:1px 1px 1px rgba(40,40,40,.75),3px 3px 3px rgba(0,0,0,.45),0 0 2px rgba(0,0,0,.3)"></div>
<div style="left:555px;top:68px;font-size:18px;line-height:24px;font-weight:bold;color:#7aa00c;white-space:nowrap;letter-spacing:.2px">调整后效果</div>
<div style="left:548px;top:97px;width:164px;height:165px;background-color:#024e9e;background-image:linear-gradient(90deg,rgba(140,150,160,.68) 0,rgba(140,150,160,.68) 1px,transparent 1px),linear-gradient(180deg,rgba(140,150,160,.68) 0,rgba(140,150,160,.68) 1px,transparent 1px);background-size:16.500px 16.500px;background-position:15.500px 15.500px;box-shadow:0 0 1px #223"></div>
</div>
</body>
</html>
